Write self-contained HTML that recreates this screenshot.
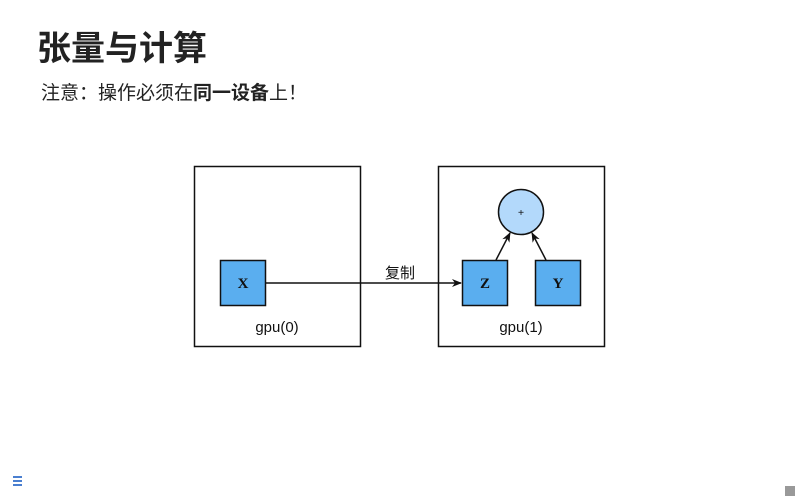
<!DOCTYPE html>
<html><head><meta charset="utf-8"><style>
body{margin:0;width:800px;height:500px;background:#fff;position:relative;overflow:hidden;font-family:"Liberation Sans","Noto Sans CJK SC",sans-serif;}
h1{position:absolute;left:37px;top:28px;margin:0;font-size:34px;font-weight:bold;color:#222;line-height:42px;}
.sub{position:absolute;left:41px;top:81px;font-size:19px;color:#222;line-height:26px;}
.sub b{font-weight:bold;}
.menu{position:absolute;left:13px;top:476px;width:9px;}
.menu i{display:block;height:2px;background:#4a7fd0;margin-bottom:2px;}
.pg{position:absolute;left:785px;top:486px;width:10px;height:10px;background:#999;}
</style></head><body>
<h1>张量与计算</h1>
<div class="sub">注意：操作必须在<b>同一设备</b>上！</div>
<svg width="800" height="500" style="position:absolute;left:0;top:0">
<defs><marker id="a" markerWidth="10" markerHeight="8" refX="9" refY="4" orient="auto" markerUnits="userSpaceOnUse"><path d="M0,0 L10,4 L0,8 L3,4 Z" fill="#111"/></marker></defs>
<rect x="194.5" y="166.5" width="166" height="180" fill="none" stroke="#111" stroke-width="1.5"/>
<rect x="438.5" y="166.5" width="166" height="180" fill="none" stroke="#111" stroke-width="1.5"/>
<rect x="220.5" y="260.5" width="45" height="45" fill="#5aaeef" stroke="#111" stroke-width="1.5"/>
<rect x="462.5" y="260.5" width="45" height="45" fill="#5aaeef" stroke="#111" stroke-width="1.5"/>
<rect x="535.5" y="260.5" width="45" height="45" fill="#5aaeef" stroke="#111" stroke-width="1.5"/>
<circle cx="521" cy="212" r="22.5" fill="#b3d9fb" stroke="#111" stroke-width="1.5"/>
<line x1="266" y1="283" x2="461" y2="283" stroke="#111" stroke-width="1.5" marker-end="url(#a)"/>
<line x1="496" y1="260" x2="510" y2="233" stroke="#111" stroke-width="1.5" marker-end="url(#a)"/>
<line x1="546" y1="260" x2="532" y2="233" stroke="#111" stroke-width="1.5" marker-end="url(#a)"/>
<g font-family="Liberation Serif,serif" font-weight="bold" font-size="15" fill="#111" text-anchor="middle">
<text x="243" y="288">X</text><text x="485" y="288">Z</text><text x="558" y="288">Y</text>
<text x="521" y="216" font-size="11">+</text></g>
<g font-family="Liberation Sans,'Noto Sans CJK SC',sans-serif" font-size="15" fill="#111" text-anchor="middle">
<text x="277" y="332">gpu(0)</text><text x="521" y="332">gpu(1)</text><text x="400" y="278">复制</text></g>
</svg>
<div class="menu"><i></i><i></i><i></i></div>
<div class="pg"></div>
</body></html>
